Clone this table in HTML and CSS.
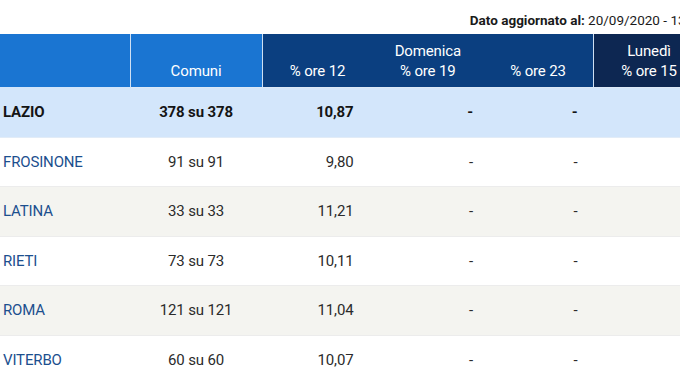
FILE: index.html
```html
<!DOCTYPE html>
<html lang="it">
<head>
<meta charset="utf-8">
<link rel="stylesheet" href="styles.css">
</head>
<body>
<div class="page">
  <div class="note"><b>Dato aggiornato al:</b> 20/09/2020 - 13:00</div>
  <table class="tab">
    <colgroup>
      <col class="c-name"><col class="c-com"><col class="c-v"><col class="c-v"><col class="c-v"><col class="c-v">
    </colgroup>
    <thead>
      <tr class="top">
        <th class="h-light sep" rowspan="2"></th>
        <th class="h-light sep com-h" rowspan="2">Comuni</th>
        <th class="h-dark sep" colspan="3">Domenica</th>
        <th class="h-navy">Lunedì</th>
      </tr>
      <tr class="sub">
        <th class="h-dark">% ore 12</th>
        <th class="h-dark">% ore 19</th>
        <th class="h-dark sep">% ore 23</th>
        <th class="h-navy">% ore 15</th>
      </tr>
    </thead>
    <tbody>
      <tr class="total">
        <td class="name">LAZIO</td><td class="com">378 su 378</td><td class="v1">10,87</td><td class="v2">-</td><td class="v3">-</td><td></td>
      </tr>
      <tr>
        <td class="name">FROSINONE</td><td class="com">91 su 91</td><td class="v1">9,80</td><td class="v2">-</td><td class="v3">-</td><td></td>
      </tr>
      <tr class="alt">
        <td class="name">LATINA</td><td class="com">33 su 33</td><td class="v1">11,21</td><td class="v2">-</td><td class="v3">-</td><td></td>
      </tr>
      <tr>
        <td class="name">RIETI</td><td class="com">73 su 73</td><td class="v1">10,11</td><td class="v2">-</td><td class="v3">-</td><td></td>
      </tr>
      <tr class="alt">
        <td class="name">ROMA</td><td class="com">121 su 121</td><td class="v1">11,04</td><td class="v2">-</td><td class="v3">-</td><td></td>
      </tr>
      <tr>
        <td class="name">VITERBO</td><td class="com">60 su 60</td><td class="v1">10,07</td><td class="v2">-</td><td class="v3">-</td><td></td>
      </tr>
    </tbody>
  </table>
</div>
</body>
</html>
```

FILE: styles.css
```css
html, body {
  margin: 0;
  padding: 0;
  background: #ffffff;
  overflow: hidden;
}
body {
  font-family: Roboto, "Noto Sans", sans-serif;
  color: #222;
}
.page {
  width: 704px;
}
.note {
  height: 34px;
  box-sizing: border-box;
  padding-top: 11px;
  line-height: 18px;
  text-align: right;
  font-size: 13.5px;
  color: #1a1a1a;
  white-space: nowrap;
}
.note b {
  font-weight: 700;
}
.tab {
  width: 704px;
  table-layout: fixed;
  border-collapse: collapse;
  font-size: 15px;
  letter-spacing: -0.15px;
}
.c-name { width: 130px; }
.c-com { width: 132px; }
.c-v { width: 110.5px; }
th {
  font-weight: 400;
  color: #ffffff;
  padding: 0;
  text-align: center;
  line-height: 20px;
}
tr.top { height: 27px; }
tr.top th { vertical-align: bottom; }
tr.sub { height: 26px; }
tr.sub th { vertical-align: top; border-bottom: 1px solid #dde9f7; }
th.com-h { vertical-align: bottom !important; padding-bottom: 6px; border-bottom: 1px solid #dde9f7; }
.h-light { background: #1a75d2; }
.h-dark { background: #0b3f80; }
.h-navy { background: #0d2752; }
th.sep { border-right: 1px solid #cfe0f3; }
tbody tr { height: 49px; background: #ffffff; }
tbody tr.alt { height: 50px; background: #f4f4f0; }
tbody tr.total { height: 50px; background: #d3e6fb; }
td {
  padding: 0;
  line-height: 20px;
  border-bottom: 1px solid #ececec;
  color: #2b2b2b;
  vertical-align: middle;
  white-space: nowrap;
}
tbody tr.total td { font-weight: 700; color: #141414; border-bottom-color: #e2ecf7; }
td.name { padding-left: 3px; color: #1c4f8e; }
tbody tr.total td.name { color: #141414; }
td.com { text-align: center; }
td.v1 { text-align: right; padding-right: 19px; }
td.v2 { text-align: right; padding-right: 10px; }
td.v3 { text-align: right; padding-right: 16px; }
```
